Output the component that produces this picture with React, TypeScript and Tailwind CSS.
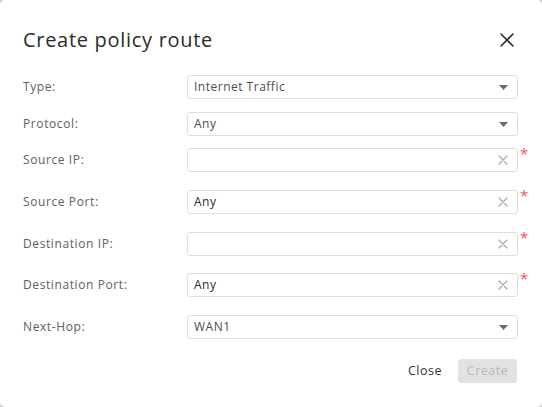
import React from "react";

type Row = {
  label: string;
  kind: "select" | "input";
  value: string;
  required?: boolean;
  mt: string;
};

const ROWS: Row[] = [
  { label: "Type:", kind: "select", value: "Internet Traffic", mt: "mt-[21px]" },
  { label: "Protocol:", kind: "select", value: "Any", mt: "mt-[13px]" },
  { label: "Source IP:", kind: "input", value: "", required: true, mt: "mt-[12px]" },
  { label: "Source Port:", kind: "input", value: "Any", required: true, mt: "mt-[18px]" },
  { label: "Destination IP:", kind: "input", value: "", required: true, mt: "mt-[18px]" },
  { label: "Destination Port:", kind: "input", value: "Any", required: true, mt: "mt-[17px]" },
  { label: "Next-Hop:", kind: "select", value: "WAN1", mt: "mt-[18px]" },
];

function Caret() {
  return (
    <svg width="9" height="5" viewBox="0 0 9 5" className="shrink-0">
      <path d="M0 0 H9 L4.5 5 Z" fill="#6b6b6b" />
    </svg>
  );
}

function Clear() {
  return (
    <svg width="10" height="10" viewBox="0 0 10 10" className="shrink-0">
      <path d="M1 1 L9 9 M9 1 L1 9" stroke="#a8a8a8" strokeWidth="1.2" strokeLinecap="round" />
    </svg>
  );
}

function Field({ row }: { row: Row }) {
  return (
    <div className={`flex items-start ${row.mt}`}>
      <div className="w-[164px] h-[24px] flex items-center text-[12px] tracking-[0.6px] text-[#606060]">{row.label}</div>
      <div className="w-[331px] h-[24px] border border-[#dedede] rounded-[3px] bg-white flex items-center pl-[6px] pr-[9px]">
        <span
          className={`flex-1 text-[12px] tracking-[0.5px] ${row.kind === "input" ? "text-[#2a2a2a]" : "text-[#4d4d4d]"}`}
        >
          {row.value}
        </span>
        {row.kind === "select" ? <Caret /> : <Clear />}
      </div>
      {row.required && <span className="ml-[2px] -mt-[3px] text-[15px] leading-[16px] text-[#ff4d5a]">*</span>}
    </div>
  );
}

export default function App() {
  return (
    <div className="w-[542px] h-[407px] bg-[#cfcfcf]" style={{ fontFamily: "'Open Sans', Lato, sans-serif" }}>
      <div className="w-full h-full bg-white rounded-[5px] pl-[23px] pt-[26px] flex flex-col">
        {/* header */}
        <div className="h-[28px] flex items-center pr-[28px]">
          <h2 className="flex-1 text-[20px] text-[#2b2b2b] tracking-[0.7px]">Create policy route</h2>
          <svg width="14" height="14" viewBox="0 0 14 14">
            <path d="M1 1 L13 13 M13 1 L1 13" stroke="#2f2f2f" strokeWidth="1.6" strokeLinecap="round" />
          </svg>
        </div>

        {ROWS.map(r => (
          <Field key={r.label} row={r} />
        ))}

        {/* footer */}
        <div className="mt-[20px] flex items-center justify-end pr-[25px] gap-[16px]">
          <span className="text-[12.5px] tracking-[0.5px] text-[#333]">Close</span>
          <button className="w-[59px] h-[24px] rounded-[3px] bg-[#e2e2e2] text-[12.5px] tracking-[0.5px] text-[#b8b8b8]">
            Create
          </button>
        </div>
      </div>
    </div>
  );
}
